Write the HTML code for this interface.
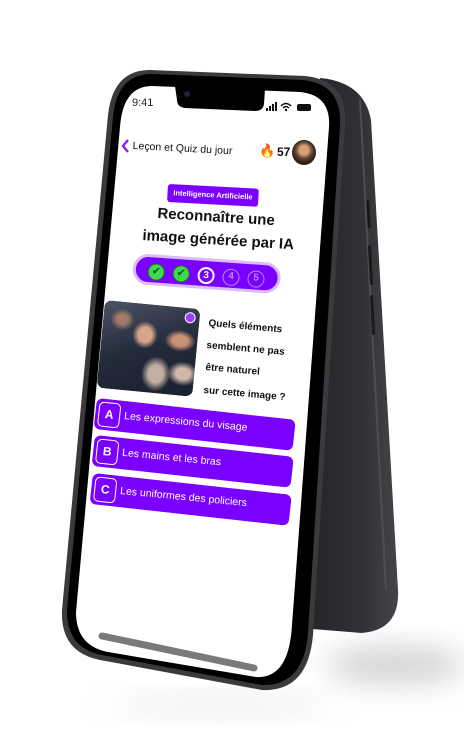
<!DOCTYPE html>
<html><head><meta charset="utf-8"><style>
*{margin:0;padding:0;box-sizing:border-box}
body{width:464px;height:751px;background:#fff;position:relative;overflow:hidden;font-family:"Liberation Sans",sans-serif}
.a{position:absolute;transform-origin:0 0;white-space:nowrap}
.btn{position:absolute;transform-origin:0 0;width:200px;height:31px;background:#7a00ff;border-radius:6px;transform:rotate(6.3deg)}
.btn .l{position:absolute;left:3px;top:3px;width:22px;height:25px;border:1.5px solid #fff;border-radius:5px;color:#fff;font-weight:bold;font-size:12px;text-align:center;line-height:22px}
.btn .t{position:absolute;left:29px;top:8px;color:#fff;font-size:10.5px;transform:rotate(-0.8deg)}
.q{font-weight:bold;font-size:10px;color:#111}
.c{position:absolute;width:17px;height:17px;border-radius:50%;top:6px}
</style></head><body>
<svg width="464" height="751" style="position:absolute;left:0;top:0">
<defs>
<filter id="b" x="-50%" y="-50%" width="200%" height="200%"><feGaussianBlur stdDeviation="14"/></filter>
<linearGradient id="sp" x1="0" y1="0" x2="1" y2="0"><stop offset="0" stop-color="#232326"/><stop offset=".6" stop-color="#303034"/><stop offset="1" stop-color="#444449"/></linearGradient>
</defs>
<ellipse cx="395" cy="665" rx="70" ry="20" fill="#c4c4c4" filter="url(#b)" opacity=".7"/>
<ellipse cx="220" cy="705" rx="110" ry="10" fill="#ddd" filter="url(#b)" opacity=".5"/>
<path d="M320,78 Q364,82 371,120 L398,590 Q400,630 362,633 L300,628 Z" fill="url(#sp)"/>
<path d="M360,100 L386,590" stroke="#4d4d52" stroke-width="2" fill="none"/>
<rect x="367" y="200" width="3" height="28" rx="1.5" fill="#1a1a1a" transform="rotate(-3 368 214)"/>
<rect x="369" y="245" width="3" height="40" rx="1.5" fill="#1a1a1a" transform="rotate(-3 370 265)"/>
<rect x="371" y="295" width="3" height="40" rx="1.5" fill="#1a1a1a" transform="rotate(-3 372 315)"/>
<path d="M150,70 L305,76 Q348,80 345,125 L313,635 Q308,692 262,690 L100,660 Q60,652 62,610 L108,115 Q113,70 150,70 Z" fill="#3a3a3d"/>
<path d="M152,74 L303,80 Q342,84 340,125 L308,633 Q304,686 262,685 L102,655 Q66,648 67,610 L113,117 Q117,74 152,74 Z" fill="#000"/>
<path d="M152,86 L300,92 Q331,95 329,127 L292,625 Q289,679 256,677 L108,652 Q76,646 76,612 L120,127 Q123,86 152,86 Z" fill="#fff"/>
<path d="M175,86 L265,89 L264,104 Q263,111 255,111 L185,108 Q177,107 177,100 Z" fill="#000"/>
<circle cx="187" cy="94" r="3" fill="#1a2240"/>
<path d="M102,636 L254,668" stroke="#7a7a7a" stroke-width="7" stroke-linecap="round"/>
</svg>

<div class="a" style="left:132px;top:97px;font-size:11px;color:#222">9:41</div>
<svg class="a" style="left:266px;top:101px" width="48" height="12">
<rect x="0" y="7" width="2" height="3" fill="#111"/><rect x="3" y="5" width="2" height="5" fill="#111"/><rect x="6" y="3" width="2" height="7" fill="#111"/><rect x="9" y="1" width="2" height="9" fill="#111"/>
<path d="M15,5 Q20,0 25,5 M17,7 Q20,4 23,7" stroke="#111" stroke-width="1.5" fill="none"/><circle cx="20" cy="9" r="1.2" fill="#111"/>
<rect x="31" y="3" width="14" height="7" rx="2" fill="#111"/>
</svg>
<svg class="a" style="left:121px;top:139px" width="10" height="14"><path d="M7,1 L2,7 L7,13" stroke="#8a1cff" stroke-width="2.4" fill="none"/></svg>
<div class="a" style="left:133px;top:140px;font-size:10.5px;color:#111;transform:rotate(3deg)">Leçon et Quiz du jour</div>
<div class="a" style="left:259px;top:143px;font-size:13px">🔥</div>
<div class="a" style="left:277px;top:145px;font-size:12px;font-weight:bold;color:#111">57</div>
<div class="a" style="left:292px;top:140px;width:24px;height:25px;border-radius:50%;background:radial-gradient(circle at 50% 40%,#d8a07a 0 25%,#6b4a2e 45%,#2a1d14 70%);border:1.5px solid #222"></div>

<div class="a" style="left:168px;top:184px;width:91px;height:18px;background:#7a00ff;border-radius:3px;color:#fff;font-size:7.5px;font-weight:bold;text-align:center;line-height:18px;transform:rotate(3deg)">Intelligence Artificielle</div>
<div class="a" style="left:158px;top:205px;font-size:15px;font-weight:bold;color:#111;transform:rotate(3.5deg)">Reconnaître une</div>
<div class="a" style="left:143px;top:227px;font-size:15px;font-weight:bold;color:#111;transform:rotate(3.5deg)">image générée par IA</div>

<div class="a" style="left:134px;top:253px;width:148px;height:31px;background:#7a00ff;border:3px solid #dcbaff;border-radius:16px;transform:rotate(4deg)">
<div class="c" style="left:12px;background:#3fd94f;border:1.5px solid #1a7a25;color:#0a5a15;font-size:11px;text-align:center;line-height:14px">✔</div>
<div class="c" style="left:37px;background:#3fd94f;border:1.5px solid #1a7a25;color:#0a5a15;font-size:11px;text-align:center;line-height:14px">✔</div>
<div class="c" style="left:62px;border:2px solid #fff;color:#fff;font-size:10px;font-weight:bold;text-align:center;line-height:13px">3</div>
<div class="c" style="left:87px;border:1.5px solid #b68cff;color:#b68cff;font-size:10px;font-weight:bold;text-align:center;line-height:14px">4</div>
<div class="c" style="left:112px;border:1.5px solid #b68cff;color:#b68cff;font-size:10px;font-weight:bold;text-align:center;line-height:14px">5</div>
</div>

<div class="a" style="left:105px;top:300px;width:96px;height:88px;border-radius:7px;overflow:hidden;transform:rotate(5.5deg);background:radial-gradient(ellipse at 45% 35%,#d9a58a 0 9%,transparent 17%),radial-gradient(ellipse at 82% 38%,#c89274 0 7%,transparent 14%),radial-gradient(ellipse at 20% 20%,#a07a66 0 5%,transparent 11%),radial-gradient(ellipse at 60% 78%,#c2aea2 0 9%,transparent 18%),radial-gradient(ellipse at 88% 75%,#d0b8a8 0 6%,transparent 13%),linear-gradient(160deg,#4a5366,#232a3a 50%,#1b2030)">
<div style="position:absolute;right:4px;top:4px;width:11px;height:11px;border-radius:50%;background:#9b40ff;border:1px solid #fff"></div>
</div>
<div class="a q" style="left:209px;top:318px;transform:rotate(5deg)">Quels éléments</div>
<div class="a q" style="left:207px;top:340px;transform:rotate(5deg)">semblent ne pas</div>
<div class="a q" style="left:206px;top:362px;transform:rotate(5deg)">être naturel</div>
<div class="a q" style="left:204px;top:385px;transform:rotate(5deg)">sur cette image ?</div>

<div class="btn" style="left:97px;top:398px"><div class="l">A</div><div class="t">Les expressions du visage</div></div>
<div class="btn" style="left:95px;top:435px"><div class="l">B</div><div class="t">Les mains et les bras</div></div>
<div class="btn" style="left:93px;top:473px"><div class="l">C</div><div class="t">Les uniformes des policiers</div></div>
</body></html>
